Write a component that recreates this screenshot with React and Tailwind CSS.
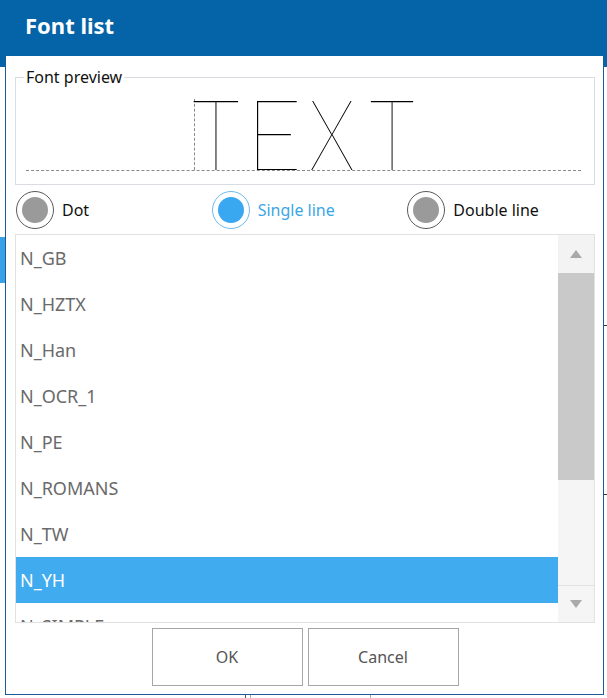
import React from 'react';

const fonts = ['N_GB', 'N_HZTX', 'N_Han', 'N_OCR_1', 'N_PE', 'N_ROMANS', 'N_TW', 'N_YH', 'N_SIMPLE'];
const selected = 'N_YH';

// preview glyphs: each one squeezed to the width of the stroke font
const previewGlyphs = [
  { ch: 'T', cls: 'scale-x-[0.83]' },
  { ch: 'E', cls: 'scale-x-[0.98]' },
  { ch: 'X', cls: 'scale-x-[0.77]' },
  { ch: 'T', cls: 'scale-x-[0.79] ml-[2px]' },
];

function Radio({ label, checked }) {
  return (
    <div className="flex items-center h-[38px]">
      <div
        className={`w-[38px] h-[38px] rounded-full border flex items-center justify-center ${
          checked ? 'border-[#6dbbec]' : 'border-[#5a5a5a]'
        }`}
      >
        <div className={`w-[26px] h-[26px] rounded-full ${checked ? 'bg-[#3aa8f0]' : 'bg-[#9a9a9a]'}`} />
      </div>
      <span className={`ml-[8px] text-[16px] ${checked ? 'text-[#3ba6e6]' : 'text-[#111]'}`}>{label}</span>
    </div>
  );
}

function Arrow({ up }) {
  return (
    <svg width="12" height="8" viewBox="0 0 12 8">
      <polygon points={up ? '6,0 12,8 0,8' : '0,0 12,0 6,8'} fill="#a9a9a9" />
    </svg>
  );
}

export default function App() {
  return (
    <div
      className="relative w-[607px] h-[698px] bg-white overflow-hidden"
      style={{ fontFamily: '"Noto Sans", "Open Sans", sans-serif' }}
    >
      {/* page behind the dialog */}
      <div className="absolute left-0 top-[56px] w-[5px] h-[11px] bg-[#0563a7]" />
      <div className="absolute left-0 top-[237px] w-[5px] h-[46px] bg-[#3aa0e8]" />
      <div className="absolute left-[604px] top-[56px] w-[3px] h-[11px] bg-[#0563a7]" />
      <div className="absolute left-[604px] top-[325px] w-[3px] h-px bg-[#333]" />
      <div className="absolute left-[604px] top-[494px] w-[3px] h-px bg-[#333]" />
      <div className="absolute left-[245px] top-[695px] w-px h-[3px] bg-[#555]" />
      <div className="absolute left-[250px] top-[695px] w-px h-[3px] bg-[#aaa]" />
      <div className="absolute left-[370px] top-[695px] w-px h-[3px] bg-[#aaa]" />

      <div className="relative">
        <header className="h-[56px] bg-[#0563a7] flex items-center px-[25px] pb-[5px]">
          <h1 className="text-white text-[22px] font-bold">Font list</h1>
        </header>

        <div className="ml-[5px] w-[599px] bg-white border border-t-0 border-[#1c5a94] flex flex-col">
          <fieldset className="ml-[9px] mt-[10px] w-[580px] border border-[#d9dde2] pb-[13px]">
            <legend className="ml-[8px] px-[2px] text-[16px] leading-[22px] text-[#111]">Font preview</legend>
            <div className="ml-[10px] mr-[13px] h-[83px] pt-[11px] border-b border-dashed border-[#8a8a8a]">
              <div className="flex items-start ml-[168px]">
                <div className="h-[71px] border-l border-dashed border-[#8a8a8a]" />
                <div className="flex -ml-[8px] -mt-[17px]">
                  {previewGlyphs.map((g, i) => (
                    <span
                      key={i}
                      className={`w-[58px] flex justify-center text-[99px] leading-none text-black ${g.cls}`}
                      style={{ fontFamily: 'Lato, sans-serif', fontWeight: 100 }}
                    >
                      {g.ch}
                    </span>
                  ))}
                </div>
              </div>
            </div>
          </fieldset>

          <div className="grid grid-cols-3 pl-[10px] mt-[6px]">
            <Radio label="Dot" />
            <Radio label="Single line" checked />
            <Radio label="Double line" />
          </div>

          <div className="ml-[9px] mt-[5px] w-[580px] h-[389px] border border-[#e1e1e1] flex overflow-hidden">
            <div className="flex-1 overflow-hidden">
              {fonts.map(f => (
                <div
                  key={f}
                  className={`h-[46px] flex items-center pl-[4px] text-[18px] ${
                    f === selected ? 'bg-[#41abf0] text-white' : 'text-[#6a6a6a]'
                  }`}
                >
                  {f}
                </div>
              ))}
            </div>
            <div className="w-[36px] flex flex-col bg-[#f5f5f5]">
              <div className="h-[38px] bg-[#f3f3f3] flex items-center justify-center">
                <Arrow up />
              </div>
              <div className="h-[207px] bg-[#c9c9c9]" />
              <div className="flex-1" />
              <div className="h-[37px] border-t border-[#e2e2e2] flex items-center justify-center">
                <Arrow />
              </div>
            </div>
          </div>

          <div className="flex justify-center gap-[5px] pl-[1px] mt-[5px] mb-[8px]">
            <button className="w-[151px] h-[58px] border border-[#a6a6a6] bg-white text-[16px] text-[#555]">OK</button>
            <button className="w-[151px] h-[58px] border border-[#a6a6a6] bg-white text-[16px] text-[#555]">Cancel</button>
          </div>
        </div>
      </div>
    </div>
  );
}
